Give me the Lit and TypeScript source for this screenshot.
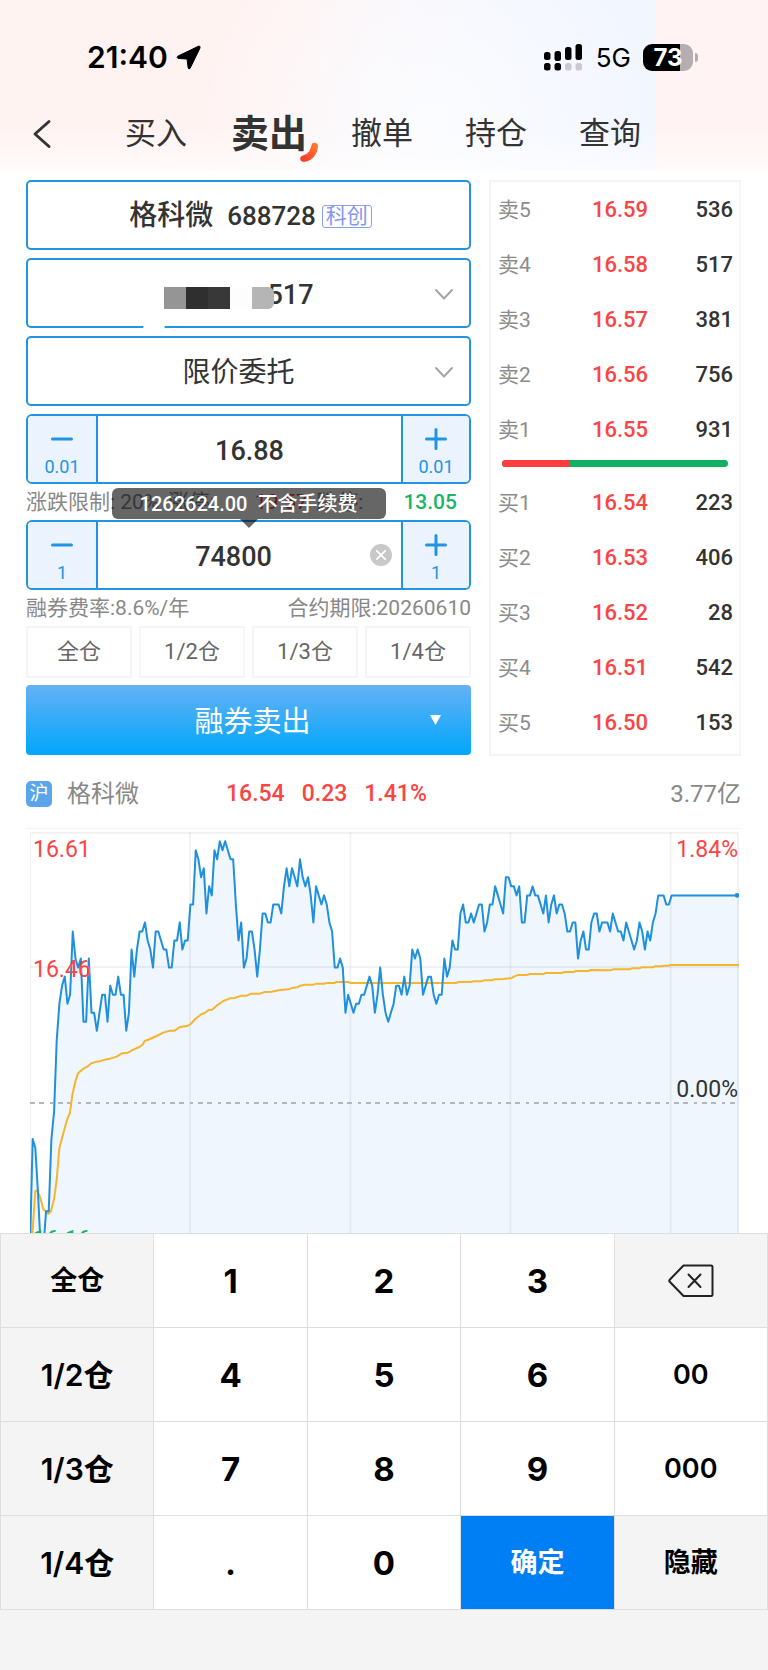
import { LitElement, html, css, svg } from "lit";
import { customElement, state } from "lit/decorators.js";
import { classMap } from "lit/directives/class-map.js";

type Level = [string, string, string];

const SELLS: Level[] = [
  ["卖5", "16.59", "536"],
  ["卖4", "16.58", "517"],
  ["卖3", "16.57", "381"],
  ["卖2", "16.56", "756"],
  ["卖1", "16.55", "931"],
];
const BUYS: Level[] = [
  ["买1", "16.54", "223"],
  ["买2", "16.53", "406"],
  ["买3", "16.52", "28"],
  ["买4", "16.51", "542"],
  ["买5", "16.50", "153"],
];

// Minute-by-minute price, in cents above the previous close.
const TICKS = [
  -16, -4, -5, -10, -16, -16, -12, -12, -4, -1, 7, 11, 13, 14, 11, 12, 19, 16, 15, 16,
  9, 9, 16, 10, 10, 8, 10, 12, 12, 9, 13, 12, 12, 14, 12, 12, 8, 10, 17, 14,
  17, 19, 19, 20, 18, 17, 15, 19, 19, 18, 17, 17, 15, 15, 18, 18, 20, 17, 18, 18,
  22, 22, 28, 27, 25, 26, 21, 24, 23, 28, 27, 29, 28, 29, 28, 27, 27, 22, 18, 20,
  15, 16, 19, 19, 17, 14, 17, 21, 21, 20, 20, 22, 22, 22, 21, 24, 26, 24, 26, 25,
  24, 27, 25, 24, 25, 23, 20, 24, 23, 22, 23, 22, 20, 19, 15, 15, 16, 15, 10, 12,
  11, 10, 11, 11, 12, 12, 13, 14, 13, 10, 12, 15, 12, 10, 9, 10, 11, 13, 13, 12,
  14, 12, 13, 17, 16, 17, 16, 12, 13, 14, 14, 12, 11, 12, 12, 16, 14, 15, 18, 17,
  17, 21, 22, 20, 20, 21, 20, 21, 22, 22, 19, 20, 22, 22, 24, 23, 22, 21, 25, 25,
  24, 24, 23, 24, 20, 20, 23, 23, 24, 23, 23, 22, 21, 23, 20, 22, 23, 21, 22, 22,
  21, 19, 19, 20, 20, 16, 18, 19, 17, 17, 20, 21, 21, 19, 20, 20, 20, 19, 21, 20,
  19, 19, 18, 20, 19, 18, 17, 18, 20, 19, 17, 19, 18, 20, 21, 23, 23, 23, 22, 22,
  23,
];

// Average-price curve in chart units.
const AVERAGE =
  "97,1245 106,1112 112,1112 120,1130 130,1168 137,1173 145,1182 153,1173 162,1138 170,1080 178,985 194,925 202,897 210,878 217,825 226,785 234,760 250,746 262,740 274,730 290,725 300,724 314,719 330,716 350,710 366,700 382,699 400,689 418,681 428,674 434,663 450,657 470,648 490,638 510,632 524,632 540,621 562,618 572,612 586,597 602,584 614,579 626,570 636,569 650,557 670,543 690,535 704,534 724,527 740,527 754,521 780,521 794,516 815,515 840,510 865,508 880,503 892,502 900,497 916,494 940,494 950,491 972,491 980,489 1002,489 1010,486 1044,486 1052,489 1368,489 1375,486 1413,486 1420,484 1445,484 1452,481 1476,481 1482,478 1510,477 1535,474 1543,469 1555,465 1580,465 1590,462 1630,462 1638,459 1685,459 1695,456 1720,456 1728,453 1765,453 1772,450 1830,451 1840,448 1888,448 1896,445 1918,445 1925,442 1958,442 1965,439 1985,439 1992,437 2005,437 2012,435 2217,435";

const shared = css`
  * {
    box-sizing: border-box;
  }
  button,
  input,
  select {
    font: inherit;
    color: inherit;
    margin: 0;
    padding: 0;
    border: 0;
    border-radius: 0;
    background: none;
    appearance: none;
    outline: none;
  }
  svg {
    display: block;
  }
`;

@customElement("status-header")
class StatusHeader extends LitElement {
  static styles = [
    shared,
    css`
      :host {
        display: block;
        background:
          linear-gradient(to bottom, #ffffff00 75%, #ffffff99 100%),
          linear-gradient(to right, transparent 655px, #fff4f3 655px),
          radial-gradient(ellipse 230px 220px at 430px 120px, #fbfcff 0%, #fbfcff00 100%),
          linear-gradient(to right, #fff3f2 0, #fff3f2 300px, #f8f6fb 420px, #f2f6ff 520px);
      }
      .status {
        display: flex;
        align-items: center;
        height: 114px;
        padding: 0 70px 0 87px;
        font-family: Inter, "Liberation Sans", sans-serif;
        color: #000;
      }
      .time {
        font-size: 30px;
        font-weight: 600;
      }
      .arrow {
        margin-left: 8px;
      }
      .signal {
        margin-left: auto;
      }
      .network {
        margin: 0 12px 0 13px;
        font-size: 26px;
        font-weight: 400;
      }
      .battery {
        display: flex;
        align-items: center;
        gap: 2px;
      }
      .cell {
        width: 50px;
        height: 27px;
        border-radius: 9px;
        background: linear-gradient(to right, #000 73%, #b5aeb0 73%);
        color: #fff;
        font-size: 24px;
        font-weight: 700;
        line-height: 27px;
        text-align: center;
      }
      .cap {
        width: 3px;
        height: 9px;
        border-radius: 0 4px 4px 0;
        background: #b5aeb0;
      }
      .nav {
        display: flex;
        align-items: center;
        height: 57px;
        padding: 0 32px 18px;
        color: #333;
        font-size: 31px;
      }
      .back {
        margin-right: 73px;
      }
      .tabs {
        display: flex;
        align-items: center;
        gap: 52px;
      }
      .tab {
        position: relative;
        line-height: 40px;
        font-weight: 400;
        white-space: nowrap;
      }
      .current {
        margin: 0 -20px 0 -8px;
        padding-right: 12px;
        font-size: 38px;
        font-weight: 700;
      }
      .swoosh {
        position: absolute;
        right: 0;
        bottom: -9px;
      }
    `,
  ];

  render() {
    const tabs = ["买入", "卖出", "撤单", "持仓", "查询"];
    return html`
      <div class="status">
        <span class="time">21:40</span>
        <svg class="arrow" width="25" height="25" viewBox="0 0 25 25">
          <path d="M22.5 1.2 L1.8 11.2 Q.2 12.4 2 13.4 L11 14 L12.2 23 Q12.8 25 14.2 23.2 L24 3 Q24.6 .6 22.5 1.2Z" stroke="#000" />
        </svg>
        <svg class="signal" width="39" height="27" viewBox="0 0 39 27">
          <rect x="0" y="8" width="6.5" height="8" rx="2.5" />
          <rect x="10.5" y="7" width="6.5" height="10" rx="2.5" />
          <rect x="21" y="3" width="6.5" height="13" rx="2.5" />
          <rect x="31.5" y="0" width="6.5" height="16" rx="2.5" />
          <rect x="0" y="19" width="6.5" height="7.5" rx="2.5" />
          <rect x="10.5" y="19" width="6.5" height="7.5" rx="2.5" />
          <rect x="21" y="19" width="6.5" height="7.5" rx="2.5" fill="#c9c8d4" />
          <rect x="31.5" y="19" width="6.5" height="7.5" rx="2.5" fill="#c9c8d4" />
        </svg>
        <span class="network">5G</span>
        <span class="battery"><span class="cell">73</span><span class="cap"></span></span>
      </div>
      <nav class="nav">
        <button class="back" aria-label="返回">
          <svg width="20" height="30" viewBox="0 0 20 30">
            <path d="M17 2.5 L3 15 L17 27.5" fill="none" stroke="#333" stroke-width="3" stroke-linecap="round" stroke-linejoin="round" />
          </svg>
        </button>
        <div class="tabs">
          ${tabs.map(
            (t, i) => html`<button class=${classMap({ tab: true, current: i === 1 })}>
              ${t}${i === 1
                ? html`<svg class="swoosh" width="20" height="22" viewBox="0 0 20 22">
                    <defs>
                      <linearGradient id="flame" x1="1" y1="0" x2="0" y2="1">
                        <stop offset="0" stop-color="#ff8330" />
                        <stop offset="1" stop-color="#fb3128" />
                      </linearGradient>
                    </defs>
                    <path d="M12.5 4 Q12.8 1.5 16 1.8 Q19 2.2 19 5.5 Q18.6 11 15.5 15 Q12 19.5 6 20.8 Q2 21.2 1.2 18 Q1 15.2 4 14.4 Q8 13.6 10.2 10.6 Q12 7.6 12.5 4Z" fill="url(#flame)" />
                  </svg>`
                : ""}
            </button>`
          )}
        </div>
      </nav>
    `;
  }
}

@customElement("order-form")
class OrderForm extends LitElement {
  static styles = [
    shared,
    css`
      :host {
        display: flex;
        flex-direction: column;
        color: #333;
        font-size: 27px;
        line-height: 32px;
      }
      .fields {
        display: flex;
        flex-direction: column;
        gap: 8px;
      }
      .field {
        position: relative;
        display: flex;
        align-items: center;
        justify-content: center;
        width: 100%;
        height: 70px;
        border: 2px solid #2394e2;
        border-radius: 5px;
        background: #fff;
      }
      .stock {
        gap: 6px;
        padding: 2px 0 0 4px;
        font-size: 28px;
        font-weight: 500;
      }
      .code {
        margin-left: 8px;
        font-size: 26px;
      }
      .board {
        border: 1px solid #8aa0f2;
        border-radius: 3px;
        padding: 0 3px;
        color: #8497f0;
        font-size: 21px;
        font-weight: 400;
        line-height: 21px;
      }
      .select {
        width: 100%;
        height: 100%;
        padding: 3px 20px 0 0;
        font-size: 28px;
        text-align-last: center;
      }
      .account {
        padding: 3px 0 0 84px;
        font-size: 27px;
        font-weight: 500;
      }
      .chevron {
        position: absolute;
        right: 15px;
        top: 28px;
        pointer-events: none;
      }
      .mosaic {
        position: absolute;
        left: calc(50% - 85px);
        top: 27px;
        display: flex;
        pointer-events: none;
      }
      .block {
        width: 22px;
        height: 22px;
        background: #959595;
      }
      .block:nth-child(2) {
        background: #2f2f2f;
      }
      .block:nth-child(3) {
        background: #383838;
      }
      .block:nth-child(4) {
        background: #fdfdfd;
      }
      .block:nth-child(5) {
        background: #b5b5b5;
        border-radius: 0 6px 6px 0;
      }
      .smudge {
        position: absolute;
        left: 115px;
        bottom: -4px;
        width: 22px;
        height: 6px;
        border-radius: 50%;
        background: #fff;
      }
      .stepper {
        display: grid;
        grid-template-columns: 70px 1fr 68px;
        height: 70px;
        border: 2px solid #2394e2;
        border-radius: 6px;
        overflow: hidden;
      }
      .step {
        display: flex;
        flex-direction: column;
        align-items: center;
        justify-content: flex-end;
        gap: 7px;
        padding-bottom: 5px;
        background: #ebf3fe;
        color: #2394e2;
        font-size: 18px;
        line-height: 20px;
      }
      .minus {
        border-right: 2px solid #2394e2;
      }
      .plus {
        border-left: 2px solid #2394e2;
      }
      .entry {
        position: relative;
        display: flex;
        min-width: 0;
      }
      .value {
        width: 100%;
        padding-top: 4px;
        text-align: center;
        font-weight: 500;
      }
      .quantity {
        padding-right: 32px;
      }
      .clear {
        position: absolute;
        right: 9px;
        top: 22px;
      }
      .note {
        position: relative;
        display: flex;
        align-items: center;
        justify-content: space-between;
        height: 36px;
        color: #888;
        font-size: 21px;
        white-space: nowrap;
      }
      .limits {
        padding-right: 14px;
      }
      .limit {
        display: flex;
        gap: 40px;
      }
      .up {
        color: #fb4444;
      }
      .down {
        color: #18b566;
        font-weight: 500;
      }
      .tip {
        position: absolute;
        z-index: 1;
        left: 50%;
        top: 4px;
        width: 274px;
        height: 31px;
        margin-left: -137px;
        border-radius: 6px;
        background: rgba(0, 0, 0, 0.6);
        color: #fff;
        font-size: 20px;
        font-weight: 500;
        line-height: 33px;
        text-align: center;
        white-space: pre;
      }
      .tip::after {
        content: "";
        position: absolute;
        left: 50%;
        top: 100%;
        margin-left: -9px;
        border: 9px solid transparent;
        border-top-color: rgba(0, 0, 0, 0.6);
        border-bottom: 0;
      }
      .shares {
        display: grid;
        grid-template-columns: repeat(4, 1fr);
        gap: 7px;
      }
      .share {
        height: 52px;
        border: 2px solid #f5f5f5;
        color: #666;
        font-size: 22px;
      }
      .submit {
        position: relative;
        height: 70px;
        margin-top: 7px;
        padding: 3px 0 0 8px;
        border-radius: 4px;
        background: linear-gradient(to bottom, #66b1f5, #00a6fb);
        color: #fff;
        font-size: 29px;
      }
      .more {
        position: absolute;
        right: 30px;
        top: 30px;
      }
    `,
  ];

  @state() quantity = "74800";

  private chevron() {
    return html`<svg class="chevron" width="20" height="13" viewBox="0 0 20 13">
      <path d="M2 2 L10 10.5 L18 2" fill="none" stroke="#a6a6a6" stroke-width="2" stroke-linecap="round" />
    </svg>`;
  }

  private step(kind: "minus" | "plus", amount: string) {
    return html`<button class="step ${kind}">
      <svg width="22" height="22" viewBox="0 0 22 22" fill="none" stroke="#2394e2" stroke-width="3" stroke-linecap="round">
        <path d=${kind === "plus" ? "M1.5 11 H20.5 M11 1.5 V20.5" : "M1.5 11 H20.5"} />
      </svg>
      ${amount}
    </button>`;
  }

  render() {
    return html`
      <div class="fields">
        <button class="field stock">
          <span>格科微</span><span class="code">688728</span><span class="board">科创</span>
        </button>
        <div class="field">
          <select class="select account" aria-label="股东账户">
            <option>517</option>
          </select>
          <div class="mosaic">
            ${[0, 1, 2, 3, 4].map(() => html`<span class="block"></span>`)}
          </div>
          <span class="smudge"></span>
          ${this.chevron()}
        </div>
        <div class="field">
          <select class="select" aria-label="委托方式">
            <option>限价委托</option>
          </select>
          ${this.chevron()}
        </div>
        <div class="stepper">
          ${this.step("minus", "0.01")}
          <div class="entry"><input class="value" aria-label="价格" value="16.88" /></div>
          ${this.step("plus", "0.01")}
        </div>
      </div>
      <div class="note limits">
        <span>涨跌限制: 20%</span>
        <span class="limit"><span>涨停:</span><span class="up">19.57</span></span>
        <span class="limit"><span>跌停:</span><span class="down">13.05</span></span>
        <div class="tip" role="tooltip">1262624.00  不含手续费</div>
      </div>
      <div class="stepper">
        ${this.step("minus", "1")}
        <div class="entry">
          <input
            class="value quantity"
            aria-label="数量"
            .value=${this.quantity}
            @input=${(e: Event) => (this.quantity = (e.target as HTMLInputElement).value)}
          />
          <button class="clear" aria-label="清空" @click=${() => (this.quantity = "")}>
            <svg width="22" height="22" viewBox="0 0 22 22">
              <circle cx="11" cy="11" r="11" fill="#c8c8c8" />
              <path d="M6.8 6.8 L15.2 15.2 M15.2 6.8 L6.8 15.2" stroke="#fff" stroke-width="1.8" stroke-linecap="round" />
            </svg>
          </button>
        </div>
        ${this.step("plus", "1")}
      </div>
      <div class="note"><span>融券费率:8.6%/年</span><span>合约期限:20260610</span></div>
      <div class="shares">
        ${["全仓", "1/2仓", "1/3仓", "1/4仓"].map((s) => html`<button class="share">${s}</button>`)}
      </div>
      <button class="submit">
        融券卖出
        <svg class="more" width="11" height="10" viewBox="0 0 11 10"><path d="M0 0 H11 L5.5 10Z" fill="#fff" /></svg>
      </button>
    `;
  }
}

@customElement("order-book")
class OrderBook extends LitElement {
  static styles = [
    shared,
    css`
      :host {
        display: block;
        padding-bottom: 4px;
        border: 2px solid #f5f5f5;
        font-size: 22px;
        line-height: 28px;
      }
      .levels {
        width: 100%;
        table-layout: fixed;
        border-collapse: collapse;
      }
      .cell {
        height: 55px;
        padding: 0;
        font-weight: 500;
        white-space: nowrap;
      }
      .name {
        width: 34%;
        padding-left: 7px;
        color: #8c8c8c;
        font-size: 21px;
        font-weight: 400;
        text-align: left;
      }
      .price {
        width: 36%;
        color: #fb4444;
        text-align: center;
      }
      .volume {
        width: 30%;
        padding-right: 6px;
        color: #333;
        text-align: right;
      }
      .balance {
        display: flex;
        height: 7px;
        margin: 3px 11px 8px;
        border-radius: 4px;
        overflow: hidden;
        background: #10b163;
      }
      .bids {
        background: #fb3d3d;
      }
    `,
  ];

  private levels(rows: Level[]) {
    return html`<table class="levels">
      <tbody>
        ${rows.map(
          ([name, price, volume]) => html`<tr>
            <th class="cell name" scope="row">${name}</th>
            <td class="cell price">${price}</td>
            <td class="cell volume">${volume}</td>
          </tr>`
        )}
      </tbody>
    </table>`;
  }

  render() {
    return html`${this.levels(SELLS)}
      <div class="balance"><span class="bids" style="width:30%"></span></div>
      ${this.levels(BUYS)}`;
  }
}

@customElement("minute-chart")
class MinuteChart extends LitElement {
  static styles = [
    shared,
    css`
      :host {
        display: block;
        padding: 0 27px 0 26px;
      }
      .quote {
        display: flex;
        align-items: center;
        height: 73px;
        padding-top: 4px;
        border-bottom: 1px solid #f4f4f4;
        color: #888;
        font-size: 24px;
        line-height: 28px;
        white-space: nowrap;
      }
      .market {
        width: 26px;
        height: 26px;
        margin-right: 15px;
        border-radius: 5px;
        background: #5ba6ea;
        color: #fff;
        font-size: 19px;
        line-height: 26px;
        text-align: center;
      }
      .figures {
        display: flex;
        gap: 17px;
        margin-left: 87px;
        color: #fb4444;
        font-size: 23px;
        font-weight: 500;
      }
      .turnover {
        margin-left: auto;
      }
      .plot {
        position: relative;
        margin: 3px 2px 0 4px;
        overflow: hidden;
        font-size: 23px;
        font-weight: 400;
        line-height: 28px;
      }
      .canvas {
        width: 100%;
        height: 401px;
        overflow: hidden;
      }
      .grid {
        fill: none;
        stroke: #000;
        stroke-opacity: 0.05;
        stroke-width: 2;
      }
      .zero {
        stroke: #b3b7bd;
        stroke-width: 2;
        stroke-dasharray: 5 4 5 6 3 5;
      }
      .area {
        fill: #eff6fd;
      }
      .average {
        fill: none;
        stroke: #f6b52e;
        stroke-width: 2;
        stroke-linejoin: round;
      }
      .trace {
        fill: none;
        stroke: #1f90de;
        stroke-width: 2;
        stroke-linejoin: round;
      }
      .end {
        fill: #1f90de;
      }
      .label {
        position: absolute;
        color: #fb4444;
      }
      .high {
        left: 3px;
        top: 4px;
      }
      .middle {
        left: 3px;
        top: 124px;
      }
      .low {
        left: 3px;
        top: 394px;
        color: #18b566;
      }
      .rise {
        right: 1px;
        top: 4px;
      }
      .flat {
        right: 1px;
        top: 244px;
        color: #333;
      }
    `,
  ];

  render() {
    const points = TICKS.map((t, i) => `${90 + i * 8.02},${849 - t * 27.08}`);
    points.push("2217,226.2");
    const line = points.join(" ");
    return html`
      <div class="quote">
        <span class="market">沪</span><span>格科微</span>
        <div class="figures"><span>16.54</span><span>0.23</span><span>1.41%</span></div>
        <span class="turnover">3.77亿</span>
      </div>
      <div class="plot">
        <svg class="canvas" viewBox="90 36 2127 1203" preserveAspectRatio="none" role="img" aria-label="分时走势">
          <polygon class="area" points="${line} 2217,1300 90,1300" />
          ${[570, 1051, 1531, 2012].map(
            (x) => svg`<line class="grid" x1=${x} x2=${x} y1="36" y2="1300" vector-effect="non-scaling-stroke" />`
          )}
          <line class="grid" x1="90" x2="2217" y1="441" y2="441" vector-effect="non-scaling-stroke" />
          <rect class="grid" x="91" y="39" width="2123" height="1300" vector-effect="non-scaling-stroke" />
          <line class="zero" x1="90" x2="2217" y1="849" y2="849" vector-effect="non-scaling-stroke" />
          <polyline class="average" points=${AVERAGE} vector-effect="non-scaling-stroke" />
          <polyline class="trace" points=${line} vector-effect="non-scaling-stroke" />
          <circle class="end" cx="2211" cy="226" r="7" />
        </svg>
        <span class="label high">16.61</span>
        <span class="label middle">16.46</span>
        <span class="label low">16.16</span>
        <span class="label rise">1.84%</span>
        <span class="label flat">0.00%</span>
      </div>
    `;
  }
}

@customElement("number-pad")
class NumberPad extends LitElement {
  static styles = [
    shared,
    css`
      :host {
        display: block;
        position: relative;
        padding-bottom: 60px;
        background: #f4f4f4;
        color: #000;
        font-family: Inter, "Noto Sans CJK SC", sans-serif;
      }
      .keys {
        display: grid;
        grid-template-columns: repeat(5, 1fr);
        grid-auto-rows: 94px;
        border-top: 1px solid #dedede;
        border-left: 1px solid #dedede;
      }
      .key {
        display: flex;
        align-items: center;
        justify-content: center;
        border-right: 1px solid #dedede;
        border-bottom: 1px solid #dedede;
        background: #fff;
        font-size: 27px;
        font-weight: 600;
        line-height: 40px;
      }
      .digit {
        font-size: 33px;
        font-weight: 700;
      }
      .amount {
        font-size: 30px;
      }
      .side {
        background: #f4f4f4;
      }
      .confirm {
        background: #007ff5;
        color: #fff;
      }
    `,
  ];

  render() {
    const rows = [
      ["全仓", "1", "2", "3", "⌫"],
      ["1/2仓", "4", "5", "6", "00"],
      ["1/3仓", "7", "8", "9", "000"],
      ["1/4仓", ".", "0", "确定", "隐藏"],
    ];
    return html`<div class="keys">
      ${rows.flat().map((k, i) => {
        const cls = classMap({
          key: true,
          digit: k.length === 1 && k !== "⌫",
          amount: k.includes("/"),
          side: i % 5 === 0 || k === "⌫" || k === "隐藏",
          confirm: k === "确定",
        });
        if (k === "⌫") {
          return html`<button class=${cls} aria-label="删除">
            <svg width="46" height="34" viewBox="0 0 46 34" fill="none" stroke="#222" stroke-width="2" stroke-linejoin="round" stroke-linecap="round">
              <path d="M15.5 1.5 H43 Q44.5 1.5 44.5 3 V30.5 Q44.5 32 43 32 H15.5 L1.5 17.5 Q1 16.8 1.5 16 Z" />
              <path d="M20.5 10.5 L32.5 23 M32.5 10.5 L20.5 23" />
            </svg>
          </button>`;
        }
        return html`<button class=${cls}>${k}</button>`;
      })}
    </div>`;
  }
}

@customElement("app-root")
class AppRoot extends LitElement {
  static styles = css`
    :host {
      display: flex;
      flex-direction: column;
      min-height: 100vh;
      background: #fff;
      font-family: Roboto, "Noto Sans CJK SC", sans-serif;
    }
    .trade {
      display: grid;
      grid-template-columns: 445fr 252fr;
      gap: 18px;
      padding: 9px 27px 0 26px;
    }
    .pad {
      flex: 1;
    }
  `;

  render() {
    return html`
      <status-header></status-header>
      <main class="trade">
        <order-form></order-form>
        <order-book></order-book>
      </main>
      <minute-chart></minute-chart>
      <number-pad class="pad"></number-pad>
    `;
  }
}
